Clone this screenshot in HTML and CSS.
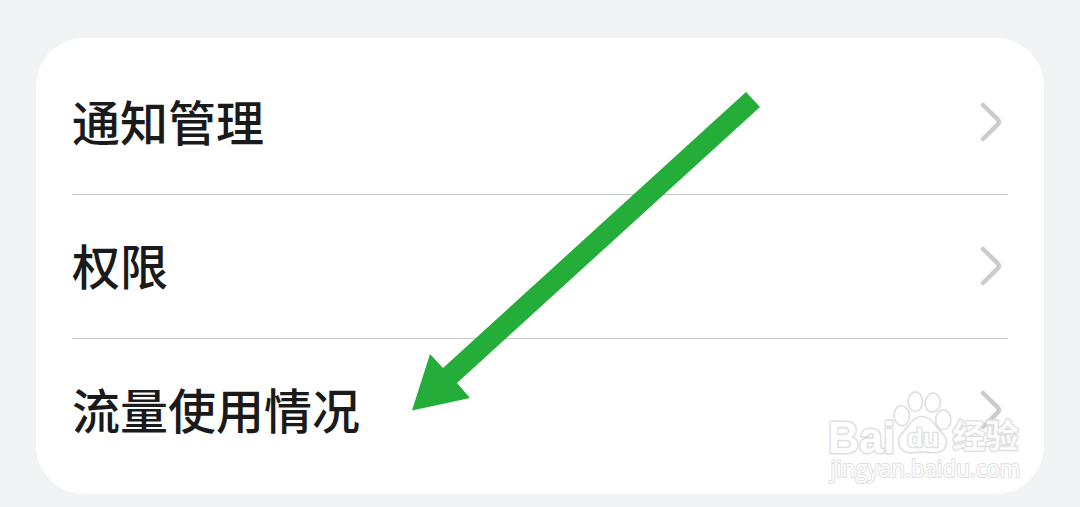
FILE: index.html
```html
<!DOCTYPE html>
<html lang="zh-CN">
<head>
    <meta charset="UTF-8">
    <title>应用信息</title>
    <link rel="stylesheet" href="styles.css">
</head>
<body>
    <div class="card">
        <div class="row">
            <span>通知管理</span>
            <svg class="chevron" viewBox="0 0 24 42"><path d="M4 4 L18.600 18.300 Q21.300 21 18.600 23.700 L4 38" /></svg>
        </div>
        <div class="row">
            <span>权限</span>
            <svg class="chevron" viewBox="0 0 24 42"><path d="M4 4 L18.600 18.300 Q21.300 21 18.600 23.700 L4 38" /></svg>
        </div>
        <div class="row">
            <span>流量使用情况</span>
            <svg class="chevron" viewBox="0 0 24 42"><path d="M4 4 L18.600 18.300 Q21.300 21 18.600 23.700 L4 38" /></svg>
        </div>
    </div>

    <!-- arrow pointing at the data usage row -->
    <svg class="arrow" viewBox="0 0 348 319">
        <polygon points="0,318.5 18,262 31,276 334,0 348,15 45,291 58,306" />
    </svg>

    <svg class="watermark" viewBox="0 0 210 105">
        <g class="paw">
            <ellipse cx="79.7" cy="30.7" rx="7.7" ry="10" transform="rotate(-6 79.7 30.7)" />
            <ellipse cx="93.3" cy="16.7" rx="7.2" ry="9.8" />
            <ellipse cx="110.700" cy="17.7" rx="7.6" ry="9.6" transform="rotate(10 110.7 17.7)" />
            <ellipse cx="121.300" cy="34.7" rx="7.6" ry="9.8" />
            <path d="M100 31.500 C107 31.500 111 36 115 42 C119 48 124.500 50 124.500 57 C124.500 65 118 68.500 111 67.700 C105 67 97 67 91 67.700 C83 68.700 76.500 65 76.500 56 C76.500 50 82 47 86 41 C90 35 94 31.500 100 31.500 Z" />
        </g>
        <text class="brand" x="6" y="67.500" textLength="67" lengthAdjust="spacingAndGlyphs">Bai</text>
        <text class="du" x="85" y="62" textLength="32" lengthAdjust="spacingAndGlyphs">du</text>
        <text class="brand-cn" x="130.500" y="63" textLength="66">经验</text>
        <text class="site" x="8.500" y="91.500" textLength="190" lengthAdjust="spacingAndGlyphs">jingyan.baidu.com</text>
    </svg>
</body>
</html>
```

FILE: styles.css
```css
body {
    position: relative;
    height: 507px;
    margin: 0;
    padding: 38px 36px 0;
    box-sizing: border-box;
    overflow: hidden;
    background-color: #f1f3f5;
    font-family: "Noto Sans CJK SC", sans-serif;
    color: #1a1a1a;
}
.card {
    height: 456px;
    padding: 12px 36px;
    box-sizing: border-box;
    background-color: #fff;
    border-radius: 48px;
}
.row {
    display: flex;
    align-items: center;
    justify-content: space-between;
    height: 144px;
    padding-right: 5px;
    box-sizing: border-box;
    font-size: 48px;
    font-weight: 500;
    line-height: 72px;
}
.row span {
    padding-bottom: 5px;
}
.row + .row {
    padding-bottom: 1px;
    border-top: 1px solid #c8c8c8;
}
.chevron {
    width: 24px;
    height: 42px;
    fill: none;
    stroke: #ccc;
    stroke-width: 4.5;
    stroke-linecap: round;
    stroke-linejoin: round;
}
.arrow {
    position: absolute;
    left: 412px;
    top: 92px;
    width: 348px;
    height: 319px;
    fill: #24ae39;
}

/* outlined watermark over the bottom corner */
.watermark {
    position: absolute;
    left: 822px;
    top: 385px;
    width: 210px;
    height: 105px;
    fill: #fff;
    stroke: #dedede;
    stroke-width: 2.6;
    stroke-linejoin: round;
    paint-order: stroke;
}
.paw {
    fill: none;
    stroke-width: 1.6;
}
.brand {
    font: 900 44px "Liberation Sans", sans-serif;
    stroke-width: 3;
}
.du {
    font: bold 25px "Liberation Sans", sans-serif;
}
.brand-cn {
    font: 700 33px "Noto Sans CJK SC", sans-serif;
    fill-opacity: 0.85;
}
.site {
    font: 23px "Open Sans", sans-serif;
    stroke-width: 2;
}
```
